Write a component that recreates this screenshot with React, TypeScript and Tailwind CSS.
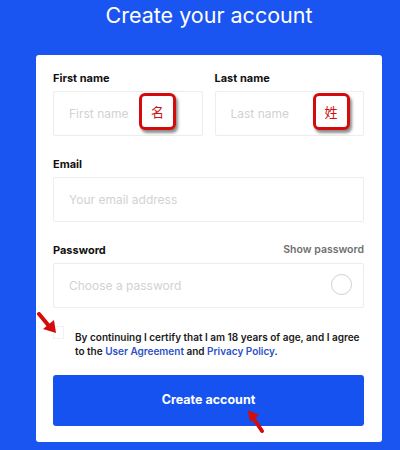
import { useState } from 'react';

function RedTag({ char, className }: { char: string; className: string }) {
  return (
    <div
      className={`absolute w-[37px] h-[37px] border-[3px] border-[#d50b0b] rounded-[6px] bg-white flex items-center justify-center shadow-[2px_3px_3px_rgba(0,0,0,0.45)] ${className}`}
    >
      <span className="text-[13px] text-[#d01010] leading-none" style={{ fontFamily: '"Noto Sans CJK SC", sans-serif' }}>
        {char}
      </span>
    </div>
  );
}

function Field({ label, placeholder, right }: { label: string; placeholder: string; right?: React.ReactNode }) {
  return (
    <div>
      <div className="flex items-center justify-between mb-[6px] h-[14px]">
        <label className="text-[11px] leading-[14px] font-bold text-[#111]">{label}</label>
        {right}
      </div>
      <div className="relative h-[45px] border border-[#ededed] rounded-[2px] flex items-center pl-[15px]">
        <span className="text-[12px] text-[#d2d2d2]">{placeholder}</span>
      </div>
    </div>
  );
}

export default function App() {
  const [agreed, setAgreed] = useState(false);

  return (
    <div
      className="w-[400px] h-[450px] overflow-hidden bg-[#1a55f1]"
      style={{ fontFamily: 'Inter, "Noto Sans", sans-serif' }}
    >
      {/* Header */}
      <h1 className="ml-[36px] w-[346px] text-center text-white text-[21.5px] leading-[30px] font-normal">
        Create your account
      </h1>

      {/* Card */}
      <div className="ml-[36px] mt-[25px] w-[346px] bg-white rounded-[3px] pt-[16px] pb-[16px] pl-[17px] pr-[18px]">
        <div className="grid grid-cols-2 gap-[12px]">
          <div className="relative">
            <Field label="First name" placeholder="First name" />
            <RedTag char="名" className="left-[86px] top-[22px]" />
          </div>
          <div className="relative">
            <Field label="Last name" placeholder="Last name" />
            <RedTag char="姓" className="left-[98px] top-[22px]" />
          </div>
        </div>

        <div className="mt-[21px]">
          <Field label="Email" placeholder="Your email address" />
        </div>

        <div className="mt-[21px] relative">
          <Field
            label="Password"
            placeholder="Choose a password"
            right={<span className="text-[10.5px] leading-[14px] font-semibold text-[#707070]">Show password</span>}
          />
          <div className="absolute right-[12px] top-[31px] w-[21px] h-[21px] rounded-full border-[1.5px] border-[#cfcfcf]" />
        </div>

        {/* Agreement */}
        <div className="relative mt-[22px] flex items-start">
          <button
            onClick={() => setAgreed(!agreed)}
            className={`mt-[-4px] w-[11px] h-[13px] shrink-0 border ${agreed ? 'bg-[#1a55f1] border-[#1a55f1]' : 'border-[#f2f2f2]'}`}
          />
          <div className="ml-[11px] text-[10px] leading-[14px] font-semibold text-[#1a1a1a]">
            <div>By continuing I certify that I am 18 years of age, and I agree</div>
            <div>
              <span>to the </span>
              <a className="text-[#2c50c8]">User Agreement</a>
              <span> and </span>
              <a className="text-[#2c50c8]">Privacy Policy</a>
              <span>.</span>
            </div>
          </div>
          {/* annotation arrow */}
          <svg className="absolute left-[-16px] top-[-18px]" width="22" height="24" viewBox="0 0 22 24">
            <path d="M2 2 L12 14" stroke="#d40c0c" strokeWidth="4" strokeLinecap="round" />
            <path d="M6 17 L19 21 L17 8 Z" fill="#d40c0c" />
          </svg>
        </div>

        {/* Submit */}
        <div className="relative mt-[17px]">
          <button className="w-full h-[51px] bg-[#1652f0] rounded-[3px] text-white text-[12.5px] font-bold">
            Create account
          </button>
          <svg className="absolute left-[193px] top-[33px]" width="20" height="26" viewBox="0 0 20 26">
            <path d="M16 23 L8 11" stroke="#d40c0c" strokeWidth="4" strokeLinecap="round" />
            <path d="M2 2 L13 7 L4 14 Z" fill="#d40c0c" />
          </svg>
        </div>
      </div>
    </div>
  );
}
